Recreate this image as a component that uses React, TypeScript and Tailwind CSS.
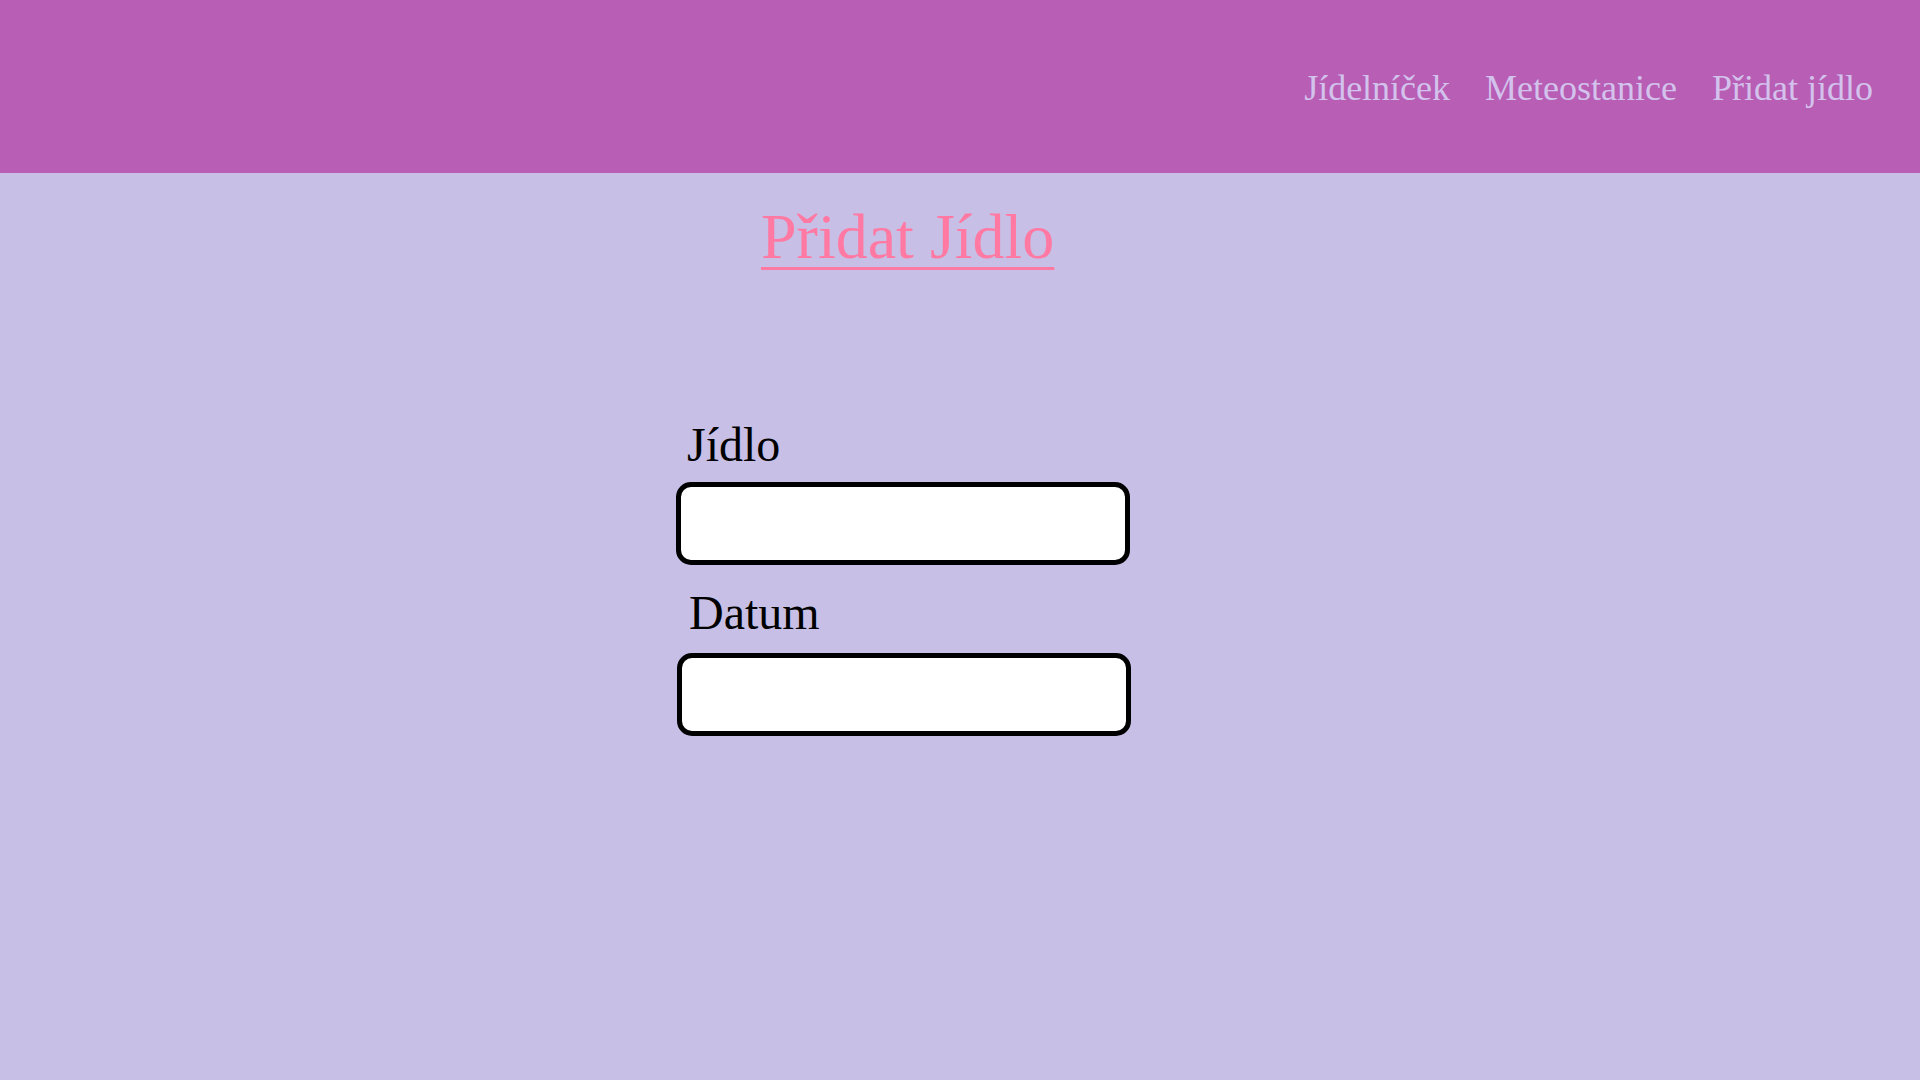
const navItems = ['Jídelníček', 'Meteostanice', 'Přidat jídlo'];

export default function App() {
  return (
    <div className="min-h-screen bg-[#c7bfe6] font-['Liberation_Serif',serif]">
      <header className="flex h-[173px] items-start justify-end gap-[35px] bg-[#b85eb5] pr-[47px] pt-[70px]">
        {navItems.map((item) => (
          <a
            key={item}
            href="#"
            className="text-[36px] leading-[36px] text-[#d3c3ec] no-underline"
          >
            {item}
          </a>
        ))}
      </header>

      <main className="flex flex-col items-start">
        <h1 className="ml-[761px] mt-[32px] text-[64px] leading-[64px] text-[#ff79a2] underline decoration-[3px] underline-offset-[9px]">
          Přidat Jídlo
        </h1>

        <form className="ml-[676px] mt-[152px] flex flex-col items-start">
          <label
            htmlFor="jidlo"
            className="ml-[11px] text-[48px] leading-[48px] text-black"
          >
            Jídlo
          </label>
          <input
            id="jidlo"
            type="text"
            className="mt-[13px] h-[83px] w-[454px] rounded-[15px] border-[5px] border-black bg-white outline-none"
          />

          <label
            htmlFor="datum"
            className="ml-[13px] mt-[24px] text-[48px] leading-[48px] text-black"
          >
            Datum
          </label>
          <input
            id="datum"
            type="text"
            className="ml-[1px] mt-[16px] h-[83px] w-[454px] rounded-[15px] border-[5px] border-black bg-white outline-none"
          />
        </form>
      </main>
    </div>
  );
}
